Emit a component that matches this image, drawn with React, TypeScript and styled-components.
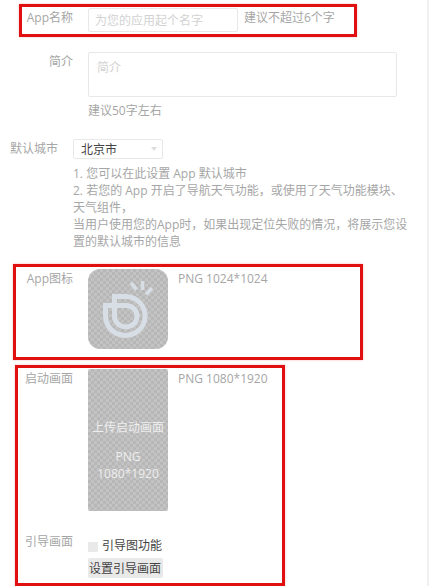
import React from "react";
import styled, { createGlobalStyle, css } from "styled-components";

const GlobalStyle = createGlobalStyle`
  * { box-sizing: border-box; }
  body {
    margin: 0;
    background: #fff;
    color: #a6a6a6;
    font: 12px/17px "Open Sans", "Noto Sans CJK SC", sans-serif;
  }
`;

const Page = styled.main`
  min-height: 100vh;
  padding: 8px 0;
  border-right: 2px solid #f0f0f0;
  overflow: hidden;
`;

const Group = styled.section<{ $gap?: number; $fit?: boolean }>`
  position: relative;
  margin-bottom: ${(p) => p.$gap ?? 20}px;
  ${(p) => p.$fit && css`width: fit-content;`}
`;

const Row = styled.div<{ $labelWidth?: number }>`
  display: grid;
  grid-template-columns: ${(p) => p.$labelWidth ?? 73}px minmax(0, 1fr);
  column-gap: 15px;
  align-items: start;
  & + & { margin-top: 21px; }
`;

const labelStyle = css`
  padding-top: 1px;
  text-align: right;
  white-space: nowrap;
`;

const Label = styled.label`
  ${labelStyle}
`;

const Caption = styled.span`
  ${labelStyle}
`;

const Inline = styled.div<{ $gap: number }>`
  display: flex;
  align-items: flex-start;
  gap: ${(p) => p.$gap}px;
`;

const Hint = styled.span`
  padding-top: 1px;
  white-space: nowrap;
`;

const Highlight = styled.div<{ $inset: string }>`
  position: absolute;
  inset: ${(p) => p.$inset};
  border: 3px solid #e01010;
  box-shadow: 0 0 2px #f5b5b5;
  pointer-events: none;
`;

const fieldStyle = css`
  display: block;
  margin: 0;
  border: 1px solid #e8e8e8;
  border-radius: 2px;
  background: #fff;
  color: #444;
  font: inherit;
  &::placeholder { color: #d2d2d2; opacity: 1; }
`;

const TextInput = styled.input`
  ${fieldStyle}
  width: 150px;
  height: 24px;
  padding: 1px 6px 0;
`;

const TextArea = styled.textarea`
  ${fieldStyle}
  width: calc(100% - 30px);
  height: 45px;
  padding: 6px 8px;
  resize: none;
`;

const Description = styled.p`
  margin: 5px 0 0;
`;

const SelectBox = styled.div`
  display: grid;
  width: 90px;
  align-items: center;
  > * { grid-area: 1 / 1; }
  > svg { justify-self: end; margin-right: 6px; pointer-events: none; }
`;

const Select = styled.select`
  ${fieldStyle}
  width: 100%;
  height: 20px;
  padding: 0 7px;
  appearance: none;
`;

const Notes = styled.p`
  margin: 6px 15px 0 0;
`;

const checker = css`
  border: 0;
  padding: 0;
  background: repeating-conic-gradient(#b7b7b7 0% 25%, #c3c3c3 0% 50%) 0 0 / 6px 6px;
  cursor: pointer;
`;

const IconUpload = styled.button`
  ${checker}
  display: block;
  width: 80px;
  height: 80px;
  border-radius: 12px;
  > svg { display: block; }
`;

const SplashUpload = styled.button`
  ${checker}
  display: flex;
  flex-direction: column;
  align-items: center;
  justify-content: center;
  gap: 12px;
  width: 80px;
  height: 142px;
  padding-top: 20px;
  border-radius: 2px;
  color: #eee;
  font: inherit;
`;

const GuideControls = styled.div`
  display: flex;
  flex-direction: column;
  align-items: flex-start;
  gap: 4px;
  padding-top: 5px;
`;

const CheckLabel = styled.label`
  display: flex;
  align-items: center;
  gap: 4px;
  color: #444;
`;

const Checkbox = styled.input`
  appearance: none;
  width: 10px;
  height: 10px;
  margin: 2px 0 0;
  border-radius: 1px;
  background: #e9e9e9;
  &:checked { background: #888; }
`;

const GuideButton = styled.button`
  height: 20px;
  padding: 0 2px 0 1px;
  border: 0;
  border-radius: 2px;
  background: #e9e9e9;
  color: #444;
  font: inherit;
`;

const AppLogo = () => (
  <svg width="80" height="80" viewBox="0 0 80 80" fill="none" stroke="#d8dee6" aria-hidden="true">
    <path
      d="M26.5 47V27.5H38.5A19.8 19.5 0 1 1 17.5 47V36.5H38.5A11.3 10.7 0 1 1 26.5 47"
      strokeWidth="5"
    />
    <path d="M43 14L48.5 20.5M54.5 12V21M64 19L58 25.5" strokeWidth="3.5" />
  </svg>
);

export default function App() {
  return (
    <>
      <GlobalStyle />
      <Page>
        <Group $fit>
          <Row>
            <Label htmlFor="name">App名称</Label>
            <Inline $gap={6}>
              <TextInput id="name" placeholder="为您的应用起个名字" />
              <Hint>建议不超过6个字</Hint>
            </Inline>
          </Row>
          <Highlight $inset="-4px -22px -5px 19px" />
        </Group>

        <Group>
          <Row>
            <Label htmlFor="intro">简介</Label>
            <div>
              <TextArea id="intro" placeholder="简介" />
              <Description>建议50字左右</Description>
            </div>
          </Row>
        </Group>

        <Group $gap={19}>
          <Row $labelWidth={58}>
            <Label htmlFor="city">默认城市</Label>
            <div>
              <SelectBox>
                <Select id="city" defaultValue="北京市">
                  <option>北京市</option>
                </Select>
                <svg width="6" height="4" viewBox="0 0 6 4" aria-hidden="true">
                  <path d="M0 0H6L3 4Z" fill="#ddd" />
                </svg>
              </SelectBox>
              <Notes>
                1. 您可以在此设置 App 默认城市
                <br />
                2. 若您的 App 开启了导航天气功能，或使用了天气功能模块、天气组件，
                <br />
                当用户使用您的App时，如果出现定位失败的情况，将展示您设置的默认城市的信息
              </Notes>
            </div>
          </Row>
        </Group>

        <Group $fit>
          <Row>
            <Caption>App图标</Caption>
            <Inline $gap={10}>
              <IconUpload type="button" aria-label="App图标">
                <AppLogo />
              </IconUpload>
              <Hint>PNG 1024*1024</Hint>
            </Inline>
          </Row>
          <Highlight $inset="-5px -95px -11px 13px" />
        </Group>

        <Group $gap={0} $fit>
          <Row>
            <Caption>启动画面</Caption>
            <Inline $gap={10}>
              <SplashUpload type="button">
                <span>上传启动画面</span>
                <span>
                  PNG
                  <br />
                  1080*1920
                </span>
              </SplashUpload>
              <Hint>PNG 1080*1920</Hint>
            </Inline>
          </Row>
          <Row>
            <Caption>引导画面</Caption>
            <GuideControls>
              <CheckLabel>
                <Checkbox type="checkbox" />
                引导图功能
              </CheckLabel>
              <GuideButton type="button">设置引导画面</GuideButton>
            </GuideControls>
          </Row>
          <Highlight $inset="-4px -17px -8px 15px" />
        </Group>
      </Page>
    </>
  );
}
